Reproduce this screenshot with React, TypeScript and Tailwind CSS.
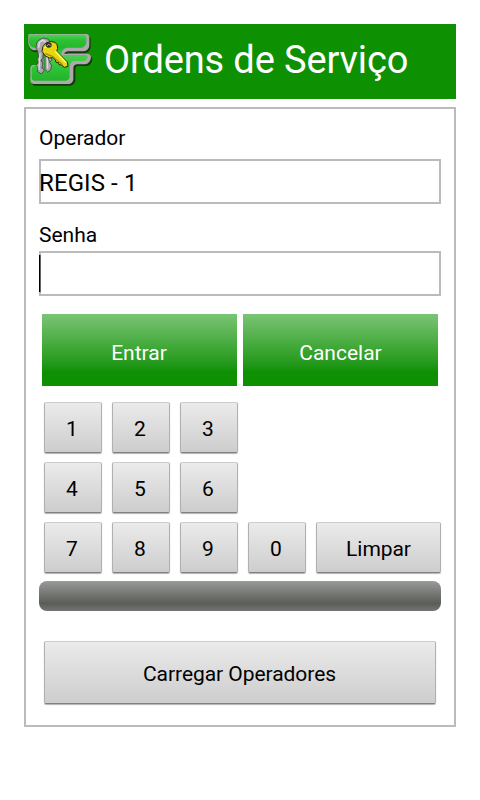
import { useState } from "react";

const keyStyle =
  "flex items-center justify-center rounded-[2px] border border-t-[#cccccc] border-x-[#b0b0b0] border-b-[#808080] bg-linear-to-b from-[#ebebeb] to-[#cdcdcd] pt-[5px] text-[21px] text-black shadow-[0_1px_1px_rgba(0,0,0,0.3)]";

const digitStyle = "h-[51px] pr-[2px]";

const actionStyle =
  "flex h-[72px] w-[195px] items-center justify-center bg-linear-to-b from-[#79c474] via-[#41a938] via-45% to-[#0d9103] to-80% pt-[8px] text-[21px] text-white";

function Logo() {
  return (
    <svg className="h-[75px] w-[80px] shrink-0" viewBox="12 12 240 225">
      <defs>
        <linearGradient id="bar" gradientUnits="userSpaceOnUse" x1="0" y1="44" x2="0" y2="184">
          <stop offset="0" stopColor="#4bd452" />
          <stop offset="0.12" stopColor="#2cc234" />
          <stop offset="0.28" stopColor="#25b62c" />
          <stop offset="0.45" stopColor="#48cf4f" />
          <stop offset="0.7" stopColor="#30c438" />
          <stop offset="1" stopColor="#21b329" />
        </linearGradient>
      </defs>
      <g strokeLinejoin="round">
        {/* drop shadow */}
        <path
          d="M31 48H203Q212 49 212 59V80Q210 97 194 99H148Q138 100 137 108H207Q217 109 217 119Q214 136 199 138H174Q166 139 166 149V182Q162 196 151 197H44Q35 195 34 184V146Q35 140 43 139H66V96H42Q29 92 28 78Z"
          fill="#123b0b"
        />
        {/* grey bevel */}
        <path
          d="M28 42H198Q208 43 208 53V77Q206 91 191 94H146Q134 95 133 101H203Q213 102 213 113Q210 131 195 133H170Q160 134 160 146V179Q157 191 146 192H41Q31 190 31 180V144Q32 136 41 135H66V91H40Q27 86 25 68V44Z"
          fill="#aea9ac"
        />
        <path
          d="M28 44H193Q199 45 199 53V69Q196 80 186 83H141Q126 86 124 105H197Q205 106 203 113Q200 121 190 123H163Q150 125 149 139V171Q147 181 138 182H42Q35 181 35 175V146Q36 139 43 138H70V83H41Q29 80 27 66Z"
          fill="url(#bar)"
        />
      </g>
      <g strokeLinejoin="round">
        {/* silver keys */}
        <path
          d="M57 60Q68 50 84 57L92 69L90 87L84 92L95 103V120L89 127L95 136L92 149L83 157L75 148V98L71 94L69 114L63 121L69 131L66 142L73 151L64 162L52 154L54 143L48 136L55 128L51 118L56 110L53 94L48 84L50 69Z"
          fill="#aaa7aa"
          stroke="#303030"
          strokeWidth="2"
        />
        <path d="M60 100L57 149M81 99L83 146" stroke="#dedcde" strokeWidth="4" fill="none" />
        <path d="M70 99L67 147M91 107L85 117L90 126" stroke="#5c5c5c" strokeWidth="3" fill="none" />
        <path d="M56 83L58 67L68 60L77 66" stroke="#d8d6d8" strokeWidth="5" fill="none" />
        {/* gold key */}
        <path
          d="M78 69Q91 61 105 67Q114 73 113 85L110 94L142 126L144 139L133 142L123 134L118 135L115 127L109 128L106 120L99 113L89 114L76 108L66 94L69 79Z"
          fill="#e8d610"
          stroke="#262311"
          strokeWidth="3"
        />
        <path d="M74 84Q80 75 94 71M106 94L138 128" stroke="#fff666" strokeWidth="5" fill="none" />
        <path d="M76 101L97 109L128 134" stroke="#a08f10" strokeWidth="4" fill="none" />
        <ellipse cx="86" cy="75" rx="9" ry="8" fill="#292b27" />
        <path d="M80 78Q84 70 92 76" stroke="#b9b7ba" strokeWidth="3" fill="none" />
      </g>
    </svg>
  );
}

function App() {
  const [senha, setSenha] = useState("");

  const press = (n: number) => setSenha(senha + n);

  return (
    <div className="h-[800px] w-[480px] bg-white px-6 pt-6 font-['Roboto',sans-serif] text-black">
      <header className="flex h-[75px] bg-[#0d9103] text-white">
        <Logo />
        <h1 className="pt-[7px] text-[38px] leading-[58px] tracking-[-0.13px] whitespace-nowrap">
          Ordens de Serviço
        </h1>
      </header>

      <main className="mt-2 h-[620px] border-2 border-[#bbbbbb] px-[13px]">
        <div className="h-[50px] pt-[17px] text-[21px] leading-[24px]">Operador</div>
        <div className="flex h-[45px] items-center border-2 border-[#bbbbbb] pt-[2px] text-[24px]">
          <span className="-ml-[2px] tracking-[0.1px]">REGIS - 1</span>
        </div>

        <div className="h-[47px] pt-[19px] text-[21px] leading-[24px]">Senha</div>
        <div className="flex h-[45px] items-center border-2 border-[#bbbbbb] text-[24px]">
          <span>{"•".repeat(senha.length)}</span>
          <span className="-ml-[2px] h-[37px] w-[2px] border-r border-[#666666] bg-black" />
        </div>

        <div className="mt-[18px] flex justify-between px-[3px]">
          <button className={`${actionStyle} pr-px`}>Entrar</button>
          <button className={actionStyle}>Cancelar</button>
        </div>

        <div className="mt-4 ml-[5px] grid grid-cols-[58px_58px_58px_58px_125px] gap-x-[10px] gap-y-[9px]">
          {[1, 2, 3, 4, 5, 6, 7, 8, 9, 0].map((n) => (
            <button
              key={n}
              onClick={() => press(n)}
              className={`${keyStyle} ${digitStyle} ${n === 4 || n === 7 ? "col-start-1" : ""}`}
            >
              {n}
            </button>
          ))}
          <button onClick={() => setSenha("")} className={`${keyStyle} h-[51px] tracking-[-0.05px]`}>
            Limpar
          </button>
        </div>

        <div className="mt-2 h-[30px] rounded-[8px] bg-linear-to-b from-[#999b99] via-[#5b5d59] via-75% to-[#737572]" />

        <button className={`${keyStyle} mt-[30px] ml-[5px] h-[63px] w-[392px] pr-px tracking-[-0.05px]`}>
          Carregar Operadores
        </button>
      </main>
    </div>
  );
}

export default App;
